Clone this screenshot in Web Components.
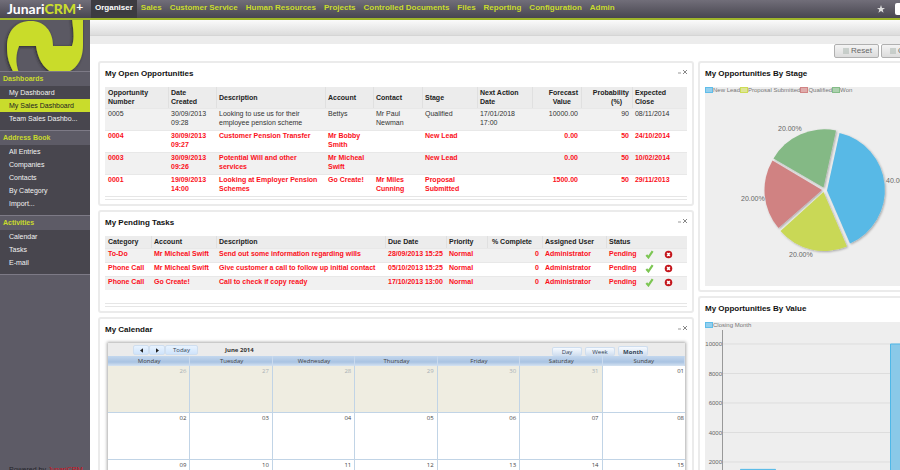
<!DOCTYPE html>
<html lang="en">
<head>
<meta charset="utf-8">
<title>JunariCRM+ Organiser</title>
<style>
  html, body { height: 100%; }
  body {
    margin: 0;
    overflow: hidden;
    display: flex;
    flex-direction: column;
    background: #fff;
    color: #333;
    font: 7px/9px "Liberation Sans", Arial, sans-serif;
    --lime: #c9dc2c;
    --grey: #ececec;
  }
  .body { flex: 1; min-height: 0; display: flex; }
  main { flex: 1; min-width: 0; overflow: hidden; }
  .ribbon { height: 15px; background: linear-gradient(#fbfbfb, #dcdcdc); border-bottom: 1px solid #d5d5d5; }
  .strip { height: 8px; background: #ececec; }
  .actions { display: flex; justify-content: flex-end; gap: 2px; height: 17px; }
  .board { display: grid; grid-template-columns: 596fr 202fr; gap: 4px; padding-left: 8px; }
  .column { display: flex; flex-direction: column; gap: 4px; min-width: 0; }
</style>
</head>
<body>
<app-header></app-header>
<div class="body">
  <side-bar>
    <side-section heading="Dashboards" items="My Dashboard|My Sales Dashboard|Team Sales Dashbo..." current="1"></side-section>
    <side-section heading="Address Book" items="All Entries|Companies|Contacts|By Category|Import..."></side-section>
    <side-section heading="Activities" items="Calendar|Tasks|E-mail"></side-section>
  </side-bar>
  <main>
    <div class="ribbon"></div>
    <div class="strip"></div>
    <div class="actions">
      <tool-button>Reset</tool-button>
      <tool-button cut>C</tool-button>
    </div>
    <div class="board">
      <div class="column">
        <dash-panel heading="My Open Opportunities"><data-grid source="opportunities"></data-grid></dash-panel>
        <dash-panel heading="My Pending Tasks"><data-grid source="tasks" compact></data-grid></dash-panel>
        <dash-panel heading="My Calendar"><month-calendar></month-calendar></dash-panel>
      </div>
      <div class="column">
        <dash-panel heading="My Opportunities By Stage" bleed><pie-chart></pie-chart></dash-panel>
        <dash-panel heading="My Opportunities By Value" bleed><bar-chart></bar-chart></dash-panel>
      </div>
    </div>
  </main>
</div>

<script>
// Small base class: each element only supplies its template string.
class BaseElement extends HTMLElement {
  constructor() {
    super();
    this.attachShadow({ mode: 'open' });
  }

  connectedCallback() {
    this.shadowRoot.innerHTML = this.template();
  }
}

const MODULES = ['Organiser', 'Sales', 'Customer Service', 'Human Resources', 'Projects',
  'Controlled Documents', 'Files', 'Reporting', 'Configuration', 'Admin'];

class AppHeader extends BaseElement {
  template() {
    return `
      <style>
        :host {
          display: flex;
          height: 18px;
          flex: none;
          background: linear-gradient(#716e79, #484650);
          border-bottom: 2px solid #9fb52b;
        }
        .brand {
          box-sizing: border-box;
          width: 90px;
          flex: none;
          padding-left: 7px;
          color: #fff;
          font: bold 14px/17px Lato, "Open Sans", sans-serif;
          white-space: nowrap;
          text-decoration: none;
        }
        .brand b { color: var(--lime); }
        .brand sup { font-size: 12px; line-height: 0; vertical-align: 3px; }
        nav { display: flex; flex: 1; padding-left: 1px; }
        nav a {
          padding: 0 4px;
          color: var(--lime);
          font-size: 8px;
          font-weight: bold;
          line-height: 16px;
          text-decoration: none;
          white-space: nowrap;
        }
        nav a.active { background: #3c3b41; color: #fff; }
        button { border: 0; padding: 0; margin: 0 10px 0 0; background: none; }
        svg { display: block; width: 8px; height: 8px; }
        input {
          align-self: center;
          box-sizing: border-box;
          width: 5px;
          height: 12px;
          padding: 0;
          border: 0;
          border-radius: 2px 0 0 2px;
          background: #fff;
        }
      </style>
      <a class="brand" href="#">Junari<b>CRM</b><sup>+</sup></a>
      <nav>${MODULES.map((m, i) => `<a href="#"${i ? '' : ' class="active"'}>${m}</a>`).join('')}</nav>
      <button aria-label="Favourites"><svg viewBox="0 0 10 10"><path fill="#ddd" d="M5 0 6.3 3.6H10L7.1 5.9 8.2 9.6 5 7.4 1.8 9.6 2.9 5.9 0 3.6H3.7Z"/></svg></button>
      <input type="search" aria-label="Search">
    `;
  }
}

class SideBar extends BaseElement {
  template() {
    return `
      <style>
        :host {
          display: flex;
          flex-direction: column;
          box-sizing: border-box;
          width: 90px;
          flex: none;
          background: #5d5b66;
        }
        .mark { display: block; width: 90px; height: 51px; flex: none; background: #5b5963; }
        .spacer { flex: 1; border-top: 1px solid #7d7a86; }
        footer { height: 5px; flex: none; padding-left: 9px; font-size: 7px; line-height: 9px; color: #24232a; white-space: nowrap; }
        footer a { color: #d01020; text-decoration: none; }
      </style>
      <svg class="mark" viewBox="0 0 90 51">
        <defs><filter id="s" x="-20%" y="-20%" width="140%" height="140%"><feDropShadow dx="-1" dy="1" stdDeviation="1.5" flood-color="#222" flood-opacity=".8"/></filter></defs>
        <path filter="url(#s)" fill="#c9dc2c" d="M14 53C9 44 7 37 7 27C7 11 16 1 31 1C44 1 53 11 53 26H72C75 18 73 9 72-2H83V25C83 43 73 53 61 53H53C43 48 38 39 36 26H19C16 34 15 42 19 53Z"/>
      </svg>
      <slot></slot>
      <div class="spacer"></div>
      <footer>Powered by <a href="#">JunariCRM</a></footer>
    `;
  }
}

class SideSection extends BaseElement {
  template() {
    const current = this.getAttribute('current');
    const items = this.getAttribute('items').split('|');
    return `
      <style>
        :host { display: block; padding-bottom: 5px; background: #48464e; }
        h2 {
          margin: 0;
          padding-left: 3px;
          border-top: 1px solid #7d7a86;
          background: #5d5b66;
          color: var(--lime);
          font-size: 7px;
          line-height: 14px;
        }
        ul { margin: 0; padding: 0; list-style: none; }
        a { display: block; padding-left: 9px; color: #f2f2f2; line-height: 13px; text-decoration: none; white-space: nowrap; }
        a.current { background: var(--lime); color: #222; }
      </style>
      <h2>${this.getAttribute('heading')}</h2>
      <ul>${items.map((t, i) => `<li><a href="#"${String(i) === current ? ' class="current"' : ''}>${t}</a></li>`).join('')}</ul>
    `;
  }
}

class ToolButton extends BaseElement {
  template() {
    return `
      <style>
        :host { display: block; overflow: hidden; }
        button {
          display: flex;
          align-items: center;
          gap: 2px;
          box-sizing: border-box;
          height: 14px;
          padding: 0 6px 0 8px;
          border: 1px solid #b0b0b0;
          border-radius: 2px;
          background: linear-gradient(#f4f4f4, #dcdcdc);
          color: #666;
          font: 8px/10px "Liberation Sans", Arial, sans-serif;
        }
        :host([cut]) { width: 19px; }
        svg { width: 6px; height: 6px; flex: none; }
      </style>
      <button><svg viewBox="0 0 6 6"><path stroke="#a9b5ae" stroke-width="1" d="M0 1H6M0 3H6M0 5H6"/><path stroke="#c6cdc8" d="M2 0V6M4 0V6" stroke-width=".5"/></svg><slot></slot></button>
    `;
  }
}

class DashPanel extends BaseElement {
  template() {
    const tools = this.hasAttribute('bleed') ? '' : `
      <div class="tools">
        <button aria-label="Minimise"><svg viewBox="0 0 4 6"><path d="M0 4H3" stroke="#999"/></svg></button>
        <button aria-label="Close"><svg viewBox="0 0 4 6"><path d="M0 1 4 5M4 1 0 5" stroke="#888"/></svg></button>
      </div>`;
    return `
      <style>
        :host {
          display: block;
          padding: 6px 5px 4px;
          border: 2px solid #ebebeb;
          border-radius: 3px;
          background: #fff;
        }
        :host([bleed]) { padding-right: 0; border-right: 0; border-radius: 3px 0 0 3px; overflow: hidden; }
        header { display: flex; justify-content: space-between; margin-bottom: 8px; }
        h1 { margin: 0; color: #111; font-size: 8px; line-height: 10px; white-space: nowrap; }
        .tools { display: flex; gap: 1px; }
        button { width: 4px; height: 6px; padding: 0; border: 0; background: none; }
        svg { display: block; width: 4px; height: 6px; }
      </style>
      <header><h1>${this.getAttribute('heading')}</h1>${tools}</header>
      <slot></slot>
    `;
  }
}

const CHECK = '<button aria-label="Complete"><svg viewBox="0 0 10 10"><path d="M1.5 5.5 3.8 8.2 8.5 1.2" fill="none" stroke="#7cc653" stroke-width="2.4"/></svg></button>';
const CANCEL = '<button aria-label="Cancel"><svg viewBox="0 0 10 10"><circle cx="5" cy="5" r="4.200" fill="#c4161c"/><path d="M3.5 3.5 6.5 6.5M6.5 3.5 3.5 6.5" stroke="#fff" stroke-width="1.7"/></svg></button>';

const GRIDS = {
  // columns: [heading, share of the width, numeric]
  opportunities: {
    columns: [['Opportunity\nNumber', 63], ['Date\nCreated', 48], ['Description', 109], ['Account', 48], ['Contact', 49],
      ['Stage', 55], ['Next Action\nDate', 55], ['Forecast\nValue', 49, true], ['Probability\n(%)', 51, true], ['Expected\nClose', 55]],
    rows: [
      ['0005', '30/09/2013\n09:28', 'Looking to use us for their\nemployee pension scheme', 'Bettys', 'Mr Paul\nNewman', 'Qualified', '17/01/2018\n17:00', '10000.00', '90', '08/11/2014'],
      ['0004', '30/09/2013\n09:27', 'Customer Pension Transfer', 'Mr Bobby\nSmith', '', 'New Lead', '', '0.00', '50', '24/10/2014'],
      ['0003', '30/09/2013\n09:26', 'Potential Will and other\nservices', 'Mr Micheal\nSwift', '', 'New Lead', '', '0.00', '50', '10/02/2014'],
      ['0001', '19/09/2013\n14:00', 'Looking at Employer Pension\nSchemes', 'Go Create!', 'Mr Miles\nCunning', 'Proposal\nSubmitted', '', '1500.00', '50', '29/11/2013'],
    ],
    overdue: [false, true, true, true],
  },
  tasks: {
    columns: [['Category', 46], ['Account', 65], ['Description', 169], ['Due Date', 61], ['Priority', 41],
      ['% Complete', 55, true], ['Assigned User', 64], ['Status', 36], ['', 19], ['', 26]],
    rows: [
      ['To-Do', 'Mr Micheal Swift', 'Send out some information regarding wills', '28/09/2013 15:25', 'Normal', '0', 'Administrator', 'Pending', CHECK, CANCEL],
      ['Phone Call', 'Mr Micheal Swift', 'Give customer a call to follow up initial contact', '05/10/2013 15:25', 'Normal', '0', 'Administrator', 'Pending', CHECK, CANCEL],
      ['Phone Call', 'Go Create!', 'Call to check if copy ready', '17/10/2013 13:00', 'Normal', '0', 'Administrator', 'Pending', CHECK, CANCEL],
    ],
    overdue: [true, true, true],
  },
};

class DataGrid extends BaseElement {
  template() {
    const { columns, rows, overdue } = GRIDS[this.getAttribute('source')];
    const total = columns.reduce((sum, c) => sum + c[1], 0);
    const num = i => (columns[i][2] ? ' class="num"' : '');
    return `
      <style>
        :host { display: block; }
        table { width: 100%; table-layout: fixed; border-spacing: 0; }
        th, td { padding: 1px 3px 3px; text-align: left; vertical-align: top; white-space: pre; }
        td { height: 18px; box-shadow: inset 0 1px #e8e8e8; }
        th {
          padding-bottom: 2px;
          background: var(--grey);
          color: #222;
          vertical-align: middle;
        }
        th + th:not(:empty) { box-shadow: inset 1px 0 #e0e0e0; }
        .num { text-align: right; }
        th.num::after { content: ""; display: inline-block; width: 7px; }
        tbody tr:nth-child(odd) { background: #f1f1f1; }
        tr.overdue { color: #fb0f1a; font-weight: bold; }
        .foot { height: 2px; border: solid #e6e6e6; border-width: 1px 0; }
        button { display: block; padding: 0; border: 0; background: none; }
        button svg { display: block; width: 9px; height: 9px; }
        td:has(button) { padding-top: 2px; }
        :host([compact]) td { height: 9px; }
        :host([compact]) .foot { margin-top: 13px; }
      </style>
      <table>
        <colgroup>${columns.map(c => `<col style="width:${c[1] / total * 100}%">`).join('')}</colgroup>
        <thead><tr>${columns.map((c, i) => `<th${num(i)}>${c[0]}</th>`).join('')}</tr></thead>
        <tbody>${rows.map((r, n) => `<tr${overdue[n] ? ' class="overdue"' : ''}>${r.map((v, i) => `<td${num(i)}>${v}</td>`).join('')}</tr>`).join('')}</tbody>
      </table>
      <div class="foot"></div>
    `;
  }
}

const DAYS = ['Monday', 'Tuesday', 'Wednesday', 'Thursday', 'Friday', 'Saturday', 'Sunday'];
const WEEKS = [
  ['26', '27', '28', '29', '30', '31', '01'],
  ['02', '03', '04', '05', '06', '07', '08'],
  ['09', '10', '11', '12', '13', '14', '15'],
];

class MonthCalendar extends BaseElement {
  template() {
    // the first week still belongs to May, except for its Sunday
    const cell = (d, w) => `<td${w === 0 && d > '20' ? ' class="other"' : ''}>${d}</td>`;
    return `
      <style>
        :host {
          display: block;
          margin: 4px 2px 0 3px;
          box-shadow: 0 0 3px 1px #aaa;
          background: #fff;
          color: #444;
          font-family: "Open Sans", "Noto Sans", sans-serif;
          font-size: 6px;
        }
        .bar { display: flex; align-items: flex-end; height: 13px; padding: 0 37px 0 25px; background: #ebebeb; }
        button {
          height: 10px;
          margin-bottom: 1px;
          padding: 0;
          border: 1px solid #cfdeef;
          border-radius: 2px;
          background: linear-gradient(#e8f3ff, #cfe3fb);
          color: #345;
          font: 6px/8px "Open Sans", "Noto Sans", sans-serif;
        }
        .step { width: 16px; }
        .step svg { display: block; width: 3px; height: 5px; margin: auto; }
        .today { width: 33px; }
        strong { flex: 1; padding: 0 0 1px 27px; line-height: 9px; color: #333; }
        .views { display: flex; align-items: flex-end; gap: 3px; }
        .views button { width: 30px; height: 9px; margin: 0; border-bottom: 0; background: linear-gradient(#f6faff, #cddcee); }
        .views .on { height: 10px; font-weight: bold; }
        table { width: 100%; table-layout: fixed; border-spacing: 0; }
        th {
          height: 10px;
          padding: 0;
          background: linear-gradient(#c3d7ee, #a9c3e2 60%, #d5e3f2);
          box-shadow: inset -1px 0 #c9daee;
          font-weight: normal;
          line-height: 9px;
        }
        td {
          box-sizing: border-box;
          height: 47px;
          padding: 1px 3px;
          border-right: 1px solid #c1d4e6;
          border-bottom: 1px solid #c1d4e6;
          text-align: right;
          vertical-align: top;
        }
        td:last-child { padding-right: 1px; border-right: 0; }
        td.other { background: #efede1; color: #a9b0b5; }
      </style>
      <div class="bar">
        <button class="step" aria-label="Previous month"><svg viewBox="0 0 4 6"><path d="M4 0V6L0 3Z" fill="#222"/></svg></button>
        <button class="step" aria-label="Next month"><svg viewBox="0 0 4 6"><path d="M0 0V6L4 3Z" fill="#222"/></svg></button>
        <button class="today">Today</button>
        <strong>June 2014</strong>
        <div class="views"><button>Day</button><button>Week</button><button class="on">Month</button></div>
      </div>
      <table>
        <thead><tr>${DAYS.map(d => `<th>${d}</th>`).join('')}</tr></thead>
        <tbody>${WEEKS.map((week, w) => `<tr>${week.map(d => cell(d, w)).join('')}</tr>`).join('')}</tbody>
      </table>
    `;
  }
}

const CHART_STYLE = `
  :host { display: block; overflow: hidden; background: #eee; }
  .legend { display: flex; height: 7px; color: #777; font-size: 6px; line-height: 6px; white-space: nowrap; }
  .legend span { display: flex; }
  .legend i { box-sizing: border-box; width: 8px; height: 6px; border: 1px solid; opacity: .8; }
  svg { display: block; }
  text { fill: #666; }
`;

function legend(entries) {
  return `<div class="legend">${entries.map(([name, fill, line]) =>
    `<span><i style="background:${fill};border-color:${line}"></i>${name}</span>`).join('')}</div>`;
}

class PieChart extends BaseElement {
  template() {
    return `
      <style>${CHART_STYLE} svg { height: 192px; width: 240px; } text { font-size: 7px; }</style>
      ${legend([['New Lead', '#7cc8ee', '#3db2e8'], ['Proposal Submitted', '#d9e47f', '#c6d932'],
        ['Qualified', '#dc9c9c', '#cb6b6b'], ['Won', '#9cca9f', '#6bb070']])}
      <svg viewBox="0 0 240 192">
        <defs><filter id="d"><feDropShadow dx="1" dy="1" stdDeviation="1" flood-color="#000" flood-opacity=".3"/></filter></defs>
        <g filter="url(#d)">
          <path fill="#58b9e6" d="M122 96.5 134.5 39A58.5 58.5 0 0 1 145 149.500Z"/>
          <path fill="#c9d856" d="M118.500 98 142 152.500A58.5 58.5 0 0 1 75.500 137Z"/>
          <path fill="#d08282" d="M117 96 73.500 134A58.5 58.5 0 0 1 67.500 66.500Z"/>
          <path fill="#84b985" d="M118.500 93.500 68.500 64.500A58.5 58.5 0 0 1 131 36.500Z"/>
        </g>
        <text x="73" y="37">20.00%</text>
        <text x="36" y="107">20.00%</text>
        <text x="84" y="163">20.00%</text>
        <text x="181" y="89">40.00%</text>
      </svg>
    `;
  }
}

class BarChart extends BaseElement {
  template() {
    const ticks = [10000, 8000, 6000, 4000, 2000, 0];
    const y = v => 15 + (10000 - v) * 59 / 4000;
    return `
      <style>${CHART_STYLE} svg { height: 180px; width: 240px; } text { font-size: 6px; }</style>
      ${legend([['Closing Month', '#7cc8ee', '#3db2e8']])}
      <svg viewBox="0 0 240 180">
        ${ticks.map(t => `<path d="M18 ${y(t)}H240" stroke="#ddd"/><text x="17" y="${y(t) + 2}" text-anchor="end">${t}</text>`).join('')}
        <path d="M17.500 1V163" stroke="#999"/>
        <path fill="#8ac9e8" stroke="#4fb8e8" d="M35.500 163V${y(1500)}H70.500V163Z"/>
        <path fill="#8ac9e8" stroke="#4fb8e8" d="M185.500 163V${y(10000)}H220.500V163Z"/>
      </svg>
    `;
  }
}

customElements.define('app-header', AppHeader);
customElements.define('side-bar', SideBar);
customElements.define('side-section', SideSection);
customElements.define('tool-button', ToolButton);
customElements.define('dash-panel', DashPanel);
customElements.define('data-grid', DataGrid);
customElements.define('month-calendar', MonthCalendar);
customElements.define('pie-chart', PieChart);
customElements.define('bar-chart', BarChart);
</script>
</body>
</html>
